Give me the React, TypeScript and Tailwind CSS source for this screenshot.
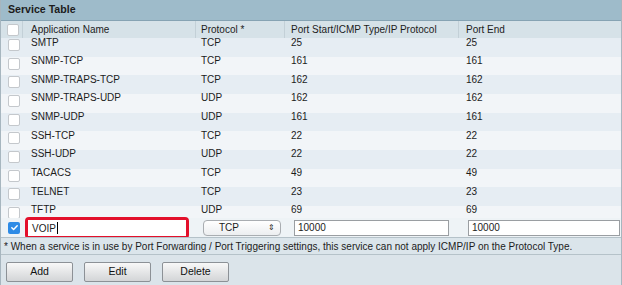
const rows = [
  ["SMTP", "TCP", "25", "25"],
  ["SNMP-TCP", "TCP", "161", "161"],
  ["SNMP-TRAPS-TCP", "TCP", "162", "162"],
  ["SNMP-TRAPS-UDP", "UDP", "162", "162"],
  ["SNMP-UDP", "UDP", "161", "161"],
  ["SSH-TCP", "TCP", "22", "22"],
  ["SSH-UDP", "UDP", "22", "22"],
  ["TACACS", "TCP", "49", "49"],
  ["TELNET", "TCP", "23", "23"],
  ["TFTP", "UDP", "69", "69"],
]

const Box = ({ checked = false }: { checked?: boolean }) =>
  checked ? (
    <span className="flex items-center justify-center w-[12px] h-[12px] rounded-[2px] bg-[#2d8be6]">
      <svg width="9" height="9" viewBox="0 0 10 10">
        <path d="M2 5.2l2 2L8 3" fill="none" stroke="white" strokeWidth="1.6" strokeLinecap="round" strokeLinejoin="round" />
      </svg>
    </span>
  ) : (
    <span className="block w-[12px] h-[12px] rounded-[2px] bg-white border border-[#c4c8cc]" />
  )

const Btn = ({ label }: { label: string }) => (
  <button className="w-[67px] h-[20px] rounded-[2px] border border-[#8c9196] bg-gradient-to-b from-[#f8f8f8] to-[#d3d5d7] text-[10.5px] text-[#111]">
    {label}
  </button>
)

const App = () => {
  return (
    <div className="w-[622px] h-[285px] flex flex-col bg-white border-x border-[#a7b6bf] font-['Liberation_Sans',Arial,sans-serif] text-[10px] text-[#1c1c1c] overflow-hidden">
      <div className="h-[21px] shrink-0 flex items-center pl-[7px] bg-[#9ebbca] border-b border-[#86a3b3] font-bold text-[10.6px]">
        Service Table
      </div>
      <div className="h-[17px] shrink-0 flex items-center bg-[#d6e2e8]">
        <div className="w-[21px] pl-[6px]"><Box /></div>
        <div className="w-[173px] h-full flex items-center pl-[8px] border-l border-[#c3d0d7]">Application Name</div>
        <div className="w-[89px] h-full flex items-center pl-[5px] border-l border-[#c3d0d7]">Protocol *</div>
        <div className="w-[174px] h-full flex items-center pl-[6px] border-l border-[#c3d0d7]">Port Start/ICMP Type/IP Protocol</div>
        <div className="flex-1 h-full flex items-center pl-[7px] border-l border-[#c3d0d7]">Port End</div>
      </div>
      <div className="h-[180px] shrink-0 overflow-hidden">
        {rows.map((r, i) => (
          <div key={r[0]} className={`h-[18.67px] flex items-start leading-[10px] ${i % 2 === 0 ? "bg-[#e6edf3]" : "bg-[#f2f5f8]"}`}>
            <div className="w-[22px] pl-[7px] pt-[1px]"><Box /></div>
            <div className="w-[173px] pl-[8px] -mt-[0.5px]">{r[0]}</div>
            <div className="w-[88px] pl-[5px] -mt-[0.5px]">{r[1]}</div>
            <div className="w-[174px] pl-[7px] -mt-[0.5px]">{r[2]}</div>
            <div className="flex-1 pl-[8px] -mt-[0.5px]">{r[3]}</div>
          </div>
        ))}
      </div>
      <div className="h-[19px] shrink-0 flex items-center bg-[#eef3f6]">
        <div className="w-[22px] pl-[7px]"><Box checked /></div>
        <div className="w-[173px] pl-[2px] pt-[1px]">
          <div className="w-[164px] h-[22px] rounded-[4px] border-[3px] border-[#e3102b] flex items-center">
            <div className="w-full h-[16px] flex items-center pl-[4px] bg-white">VOIP<span className="w-px h-[12px] bg-black ml-px" /></div>
          </div>
        </div>
        <div className="w-[88px] pl-[7px]">
          <div className="w-[78px] h-[16px] rounded-[4px] border border-[#a9adb1] bg-gradient-to-b from-white to-[#eceef0] flex items-center pl-[15px] pr-[5px]">
            <span className="flex-1">TCP</span>
            <span className="text-[8px] leading-none">⇕</span>
          </div>
        </div>
        <div className="w-[174px] pl-[10px]">
          <div className="w-[155px] h-[16px] bg-white border border-[#9a9ea2] flex items-center pl-[3px]">10000</div>
        </div>
        <div className="flex-1 pl-[10px]">
          <div className="w-[152px] h-[16px] bg-white border border-[#9a9ea2] flex items-center pl-[3px]">10000</div>
        </div>
      </div>
      <div className="h-[18px] shrink-0 flex items-center pl-[3px] bg-[#dbe5eb] border-t border-b border-[#b5c2c9]">
        * When a service is in use by Port Forwarding / Port Triggering settings, this service can not apply ICMP/IP on the Protocol Type.
      </div>
      <div className="flex-1 flex items-center gap-[11px] pl-[5px] pt-[4px] bg-[#dbe4ea]">
        <Btn label="Add" />
        <Btn label="Edit" />
        <Btn label="Delete" />
      </div>
    </div>
  )
}

export default App
